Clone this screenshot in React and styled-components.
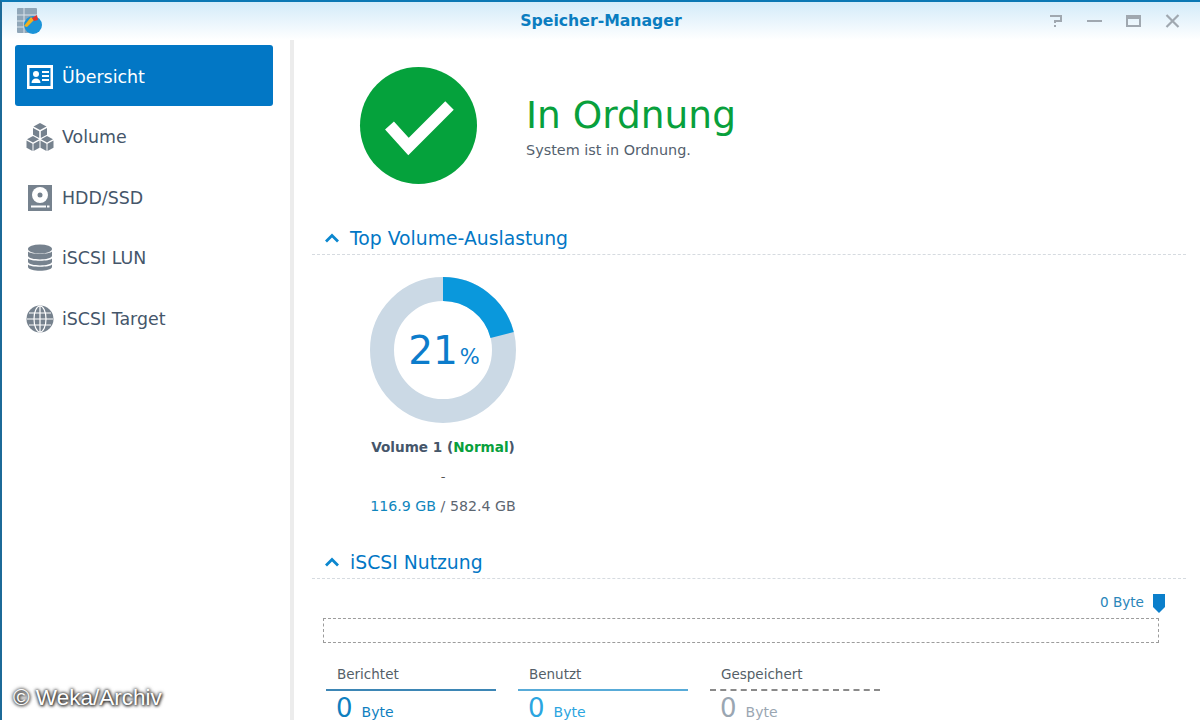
import React from 'react'
import styled, { createGlobalStyle } from 'styled-components'

const GlobalStyle = createGlobalStyle`
    html, body {
        margin: 0;
        padding: 0;
        background: #fff;
    }
    * {
        box-sizing: border-box;
    }
`

const Page = styled.div`
    position: relative;
    width: 1200px;
    height: 720px;
    overflow: hidden;
    display: flex;
    flex-direction: column;
    background: #fff;
    border-top: 2px solid #0b78b4;
    border-left: 2px solid #1c6a98;
    font-family: "DejaVu Sans", Verdana, sans-serif;
`

const TitleBar = styled.header`
    position: relative;
    flex: none;
    height: 38px;
    display: flex;
    align-items: center;
    justify-content: space-between;
    padding: 0 20px 0 13px;
    background: linear-gradient(#d3ebf9, #ffffff);
`

const AppTitle = styled.div`
    position: absolute;
    left: 0;
    right: 0;
    top: 10px;
    text-align: center;
    font-size: 15.7px;
    line-height: 18px;
    font-weight: 700;
    color: #0b7dc0;
`

const WindowButtons = styled.div`
    display: flex;
    align-items: center;
    gap: 24px;
`

const Body = styled.div`
    flex: 1;
    min-height: 0;
    display: flex;
`

const Sidebar = styled.nav`
    flex: none;
    width: 292px;
    padding: 5px 17px 0 13px;
    border-right: 4px solid #ececec;
    display: flex;
    flex-direction: column;
`

const NavItem = styled.div`
    height: ${p => (p.$active ? '61px' : '60.5px')};
    margin-bottom: ${p => (p.$active ? '1px' : '0')};
    display: flex;
    align-items: center;
    gap: 8px;
    padding: ${p => (p.$active ? '2px' : '0')} 0 0 11px;
    border-radius: 3px;
    font-size: 17.4px;
    color: ${p => (p.$active ? '#fff' : '#45566a')};
    background: ${p => (p.$active ? '#0277c5' : 'transparent')};
`

const NavIcon = styled.svg`
    flex: none;
    width: 28px;
    height: 28px;
`

const Main = styled.main`
    flex: 1;
    min-width: 0;
    padding: 27px 14px 0 18px;
    display: flex;
    flex-direction: column;
    > * {
        flex: none;
    }
`

const Status = styled.section`
    display: flex;
    align-items: center;
    gap: 49px;
    padding-left: 48px;
`

const StatusCircle = styled.div`
    width: 117px;
    height: 117px;
    border-radius: 50%;
    background: #05a23c;
    display: flex;
    align-items: center;
    justify-content: center;
`

const StatusTitle = styled.div`
    margin-bottom: 4px;
    font-size: 37.5px;
    line-height: 44px;
    color: #08a03c;
`

const StatusText = styled.div`
    font-size: 14.4px;
    line-height: 18px;
    color: #545f6e;
`

const SectionHead = styled.div`
    height: 33px;
    margin-top: ${p => p.$top};
    display: flex;
    align-items: center;
    gap: 10px;
    padding-left: 12px;
    border-bottom: 1px dashed #d6dbe0;
    font-size: 18.8px;
    color: #0277c5;
`

const Usage = styled.section`
    width: 146px;
    margin: 22px 0 0 58px;
    display: flex;
    flex-direction: column;
    align-items: center;
    text-align: center;
`

const Donut = styled.div`
    position: relative;
    width: 146px;
    height: 146px;
`

const DonutLabel = styled.div`
    position: absolute;
    inset: 0;
    display: flex;
    align-items: baseline;
    justify-content: center;
    padding: 51px 0 0 2px;
    font-size: 39px;
    line-height: 46px;
    color: #0c7ccb;
    span {
        margin-left: 2px;
        font-size: 21px;
    }
`

const VolumeName = styled.div`
    margin-top: 15px;
    font-size: 13.6px;
    line-height: 18px;
    font-weight: 700;
    white-space: nowrap;
    color: #45566a;
    span {
        color: #08a03c;
    }
`

const Dash = styled.div`
    margin-top: 12px;
    font-size: 13px;
    line-height: 18px;
    color: #555;
`

const Capacity = styled.div`
    margin-top: 11px;
    font-size: 14.2px;
    line-height: 18px;
    white-space: nowrap;
    color: #5c6671;
    span {
        color: #0f86bd;
    }
`

const BarLabel = styled.div`
    margin-top: 15px;
    padding-right: 21px;
    display: flex;
    justify-content: flex-end;
    align-items: flex-start;
    gap: 9px;
    font-size: 13.6px;
    line-height: 16px;
    color: #2a86ba;
`

const EmptyBar = styled.div`
    height: 25px;
    margin: 5px 27px 0 11px;
    border: 1px dashed #9c9c9c;
`

const Legend = styled.div`
    margin: 24px 0 0 14px;
    display: flex;
    gap: 22px;
`

const LegendItem = styled.div`
    width: 170px;
`

const LegendName = styled.div`
    height: 24px;
    padding-left: 11px;
    font-size: 13.5px;
    line-height: 14px;
    color: #555f68;
    border-bottom: 2px ${p => (p.$dashed ? 'dashed' : 'solid')} ${p => p.$line};
`

const LegendValue = styled.div`
    padding: 5px 0 0 10px;
    display: flex;
    align-items: baseline;
    gap: 9px;
    font-size: 26px;
    line-height: 24px;
    color: ${p => p.$color};
    span {
        font-size: 14px;
    }
`

const Watermark = styled.div`
    position: absolute;
    left: 11px;
    bottom: 9px;
    font-family: "Liberation Sans", Arial, sans-serif;
    font-size: 22.5px;
    line-height: 26px;
    color: #fff;
    text-shadow: 0 0 3px #222, 0 0 4px #444, 1px 1px 3px #444;
`

const AppLogo = () => (
    <svg width="28" height="28" viewBox="0 0 28 28">
        <rect x="2" y="1" width="20" height="25" rx="1" fill="#8fa6b8" />
        <path d="M2 8h20M2 14h20M2 20h20M9 1v25" stroke="#d8e2ea" strokeWidth="1" />
        <circle cx="18" cy="18" r="9" fill="#1b93d8" />
        <path d="M9 19l7-9 3 3-7 7z" fill="#f2b01e" />
        <path d="M17 11l5-3 1 5-4 1z" fill="#e8342a" />
    </svg>
)

const OverviewIcon = () => (
    <NavIcon viewBox="0 0 28 28">
        <path fillRule="evenodd" fill="#fff" d="M1 2h26v24H1zM3.5 5v18h21V5z" />
        <circle cx="10" cy="11" r="3" fill="#fff" />
        <path d="M5.5 20c0-3 2-4.500 4.500-4.500s4.500 1.500 4.500 4.500z" fill="#fff" />
        <path d="M16 9h7M16 13h7M16 17h7" stroke="#fff" strokeWidth="2" />
    </NavIcon>
)

const VolumeIcon = () => (
    <NavIcon viewBox="0 0 28 28">
        <g fill="#76828e">
            <path d="M14 0l6.500 3.500L14 7 7.500 3.500z" />
            <path d="M7 5l6.200 3.300V15L7 11.700zM21 5l-6.200 3.300V15l6.200-3.300z" />
            <path d="M7 13l6 3.300L7 19.600 1 16.300z" />
            <path d="M.5 17.500l6 3.300V28l-6-3.300zM13.500 17.500l-6 3.300V28l6-3.300z" />
            <path d="M21 13l6 3.300-6 3.300-6-3.300z" />
            <path d="M14.500 17.500l6 3.300V28l-6-3.300zM27.500 17.500l-6 3.300V28l6-3.300z" />
        </g>
    </NavIcon>
)

const DiskIcon = () => (
    <NavIcon viewBox="0 0 28 28">
        <rect x="2" y="1" width="24" height="26" fill="#76828e" />
        <circle cx="14" cy="11" r="8" fill="#fff" />
        <circle cx="14" cy="11" r="2.500" fill="#76828e" />
        <rect x="5" y="21.500" width="15" height="2" fill="#fff" />
        <rect x="21" y="21.500" width="2.500" height="2" fill="#fff" />
    </NavIcon>
)

const LunIcon = () => (
    <NavIcon viewBox="0 0 28 28">
        <g fill="#76828e">
            <ellipse cx="14" cy="5" rx="12" ry="4.500" />
            <path d="M2 7.500c2 3 22 3 24 0V12c-1 4.500-23 4.500-24 0z" />
            <path d="M2 14.500c2 3 22 3 24 0V18c-1 4.500-23 4.500-24 0z" />
            <path d="M2 20.500c2 3 22 3 24 0V23c-1 5-23 5-24 0z" />
        </g>
    </NavIcon>
)

const GlobeIcon = () => (
    <NavIcon viewBox="0 0 28 28">
        <circle cx="14" cy="14" r="13.500" fill="#76828e" />
        <g fill="none" stroke="#fff" strokeWidth="1.200">
            <ellipse cx="14" cy="14" rx="6" ry="13" />
            <path d="M14 1v26M1 14h26M3 8h22M3 20h22" />
        </g>
    </NavIcon>
)

const Chevron = () => (
    <svg width="16" height="10" viewBox="0 0 16 10">
        <path d="M2 8.500l6-6 6 6" fill="none" stroke="#0b87cf" strokeWidth="2.800" />
    </svg>
)

const usedPercent = 21

function UsageRing() {
    const r = 61
    const circumference = 2 * Math.PI * r
    return (
        <svg width="146" height="146" viewBox="0 0 146 146">
            <circle cx="73" cy="73" r={r} fill="none" stroke="#cbd9e5" strokeWidth="24" />
            <circle
                cx="73"
                cy="73"
                r={r}
                fill="none"
                stroke="#0a98dc"
                strokeWidth="24"
                strokeDasharray={`${circumference * usedPercent / 100} ${circumference}`}
                transform="rotate(-90 73 73)"
            />
        </svg>
    )
}

const navItems = [
    { label: 'Übersicht', icon: <OverviewIcon />, active: true },
    { label: 'Volume', icon: <VolumeIcon /> },
    { label: 'HDD/SSD', icon: <DiskIcon /> },
    { label: 'iSCSI LUN', icon: <LunIcon /> },
    { label: 'iSCSI Target', icon: <GlobeIcon /> },
]

const legend = [
    { name: 'Berichtet', line: '#3d86b5', color: '#0f7fc0' },
    { name: 'Benutzt', line: '#58abd8', color: '#2ba5e0' },
    { name: 'Gespeichert', line: '#8a8a8a', color: '#9aa6b2', dashed: true },
]

export default function App() {
    return (
        <Page>
            <GlobalStyle />
            <TitleBar>
                <AppLogo />
                <AppTitle>Speicher-Manager</AppTitle>
                <WindowButtons>
                    <svg width="15" height="16" viewBox="0 0 15 16">
                        <path d="M2 3h11v5H7v2" fill="none" stroke="#a0a8b0" strokeWidth="2" />
                        <rect x="6" y="12" width="2" height="2" fill="#a0a8b0" />
                    </svg>
                    <svg width="15" height="16" viewBox="0 0 15 16">
                        <rect x="0" y="7" width="15" height="2" fill="#a0a8b0" />
                    </svg>
                    <svg width="15" height="16" viewBox="0 0 15 16">
                        <path d="M1 3h13v10H1z" fill="none" stroke="#a0a8b0" strokeWidth="2" />
                        <rect x="1" y="2" width="13" height="4" fill="#a0a8b0" />
                    </svg>
                    <svg width="15" height="16" viewBox="0 0 15 16">
                        <path d="M1.500 2l12 12M13.500 2l-12 12" stroke="#a0a8b0" strokeWidth="2.200" />
                    </svg>
                </WindowButtons>
            </TitleBar>
            <Body>
                <Sidebar>
                    {navItems.map(item => (
                        <NavItem key={item.label} $active={item.active}>
                            {item.icon}
                            {item.label}
                        </NavItem>
                    ))}
                </Sidebar>
                <Main>
                    <Status>
                        <StatusCircle>
                            <svg width="70" height="60" viewBox="0 0 70 60">
                                <path d="M5.500 29.500l19 21 41-41" fill="none" stroke="#fff" strokeWidth="12" />
                            </svg>
                        </StatusCircle>
                        <div>
                            <StatusTitle>In Ordnung</StatusTitle>
                            <StatusText>System ist in Ordnung.</StatusText>
                        </div>
                    </Status>
                    <SectionHead $top="38px"><Chevron />Top Volume-Auslastung</SectionHead>
                    <Usage>
                        <Donut>
                            <UsageRing />
                            <DonutLabel>{usedPercent}<span>%</span></DonutLabel>
                        </Donut>
                        <VolumeName>Volume 1 (<span>Normal</span>)</VolumeName>
                        <Dash>-</Dash>
                        <Capacity><span>116.9 GB</span> / 582.4 GB</Capacity>
                    </Usage>
                    <SectionHead $top="31px"><Chevron />iSCSI Nutzung</SectionHead>
                    <BarLabel>
                        0 Byte
                        <svg width="12" height="19" viewBox="0 0 12 19">
                            <path d="M0 0h12v13l-6 6-6-6z" fill="#0b7fcb" />
                        </svg>
                    </BarLabel>
                    <EmptyBar />
                    <Legend>
                        {legend.map(item => (
                            <LegendItem key={item.name}>
                                <LegendName $line={item.line} $dashed={item.dashed}>{item.name}</LegendName>
                                <LegendValue $color={item.color}>0 <span>Byte</span></LegendValue>
                            </LegendItem>
                        ))}
                    </Legend>
                </Main>
            </Body>
            <Watermark>© Weka/Archiv</Watermark>
        </Page>
    )
}
